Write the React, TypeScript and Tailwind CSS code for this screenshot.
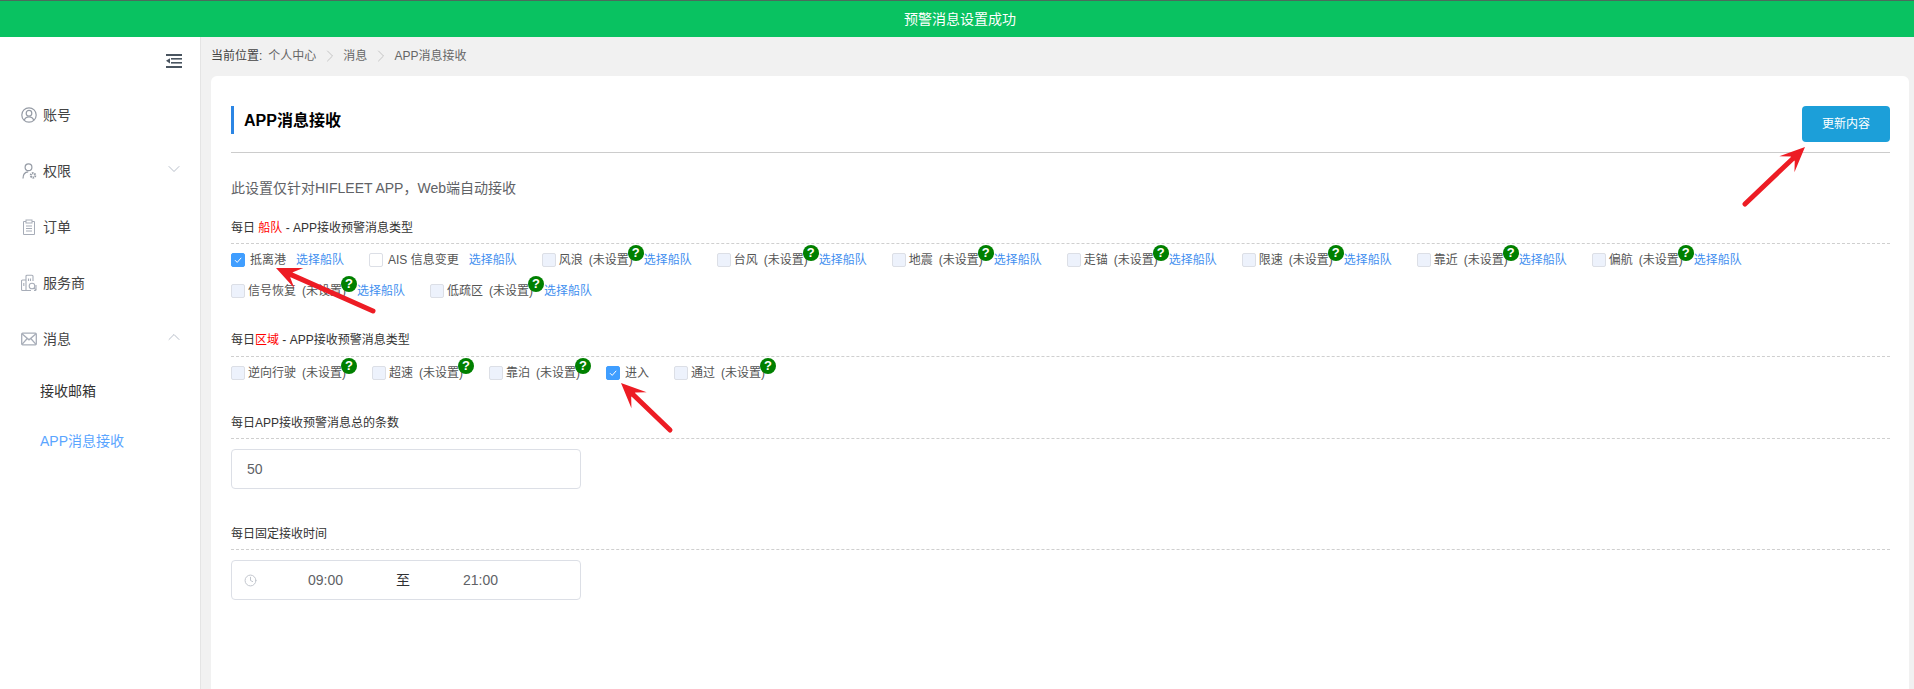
import { ChevronDown, ChevronRight, ChevronUp, Clock } from 'lucide-react';

const font = 'font-["Liberation_Sans","Noto_Sans_CJK_SC",sans-serif]';

function Check({ on = false, off = false }: { on?: boolean; off?: boolean }) {
  if (on) {
    return (
      <span className="flex h-[14px] w-[14px] shrink-0 items-center justify-center rounded-[2px] border border-[#409eff] bg-[#409eff]">
        <svg width="10" height="10" viewBox="0 0 10 10" fill="none" stroke="white" strokeWidth="1">
          <path d="M2 5.2 4.2 7.4 8.2 2.8" />
        </svg>
      </span>
    );
  }
  return <span className={`h-[14px] w-[14px] shrink-0 rounded-[2px] border border-[#dcdfe6] ${off ? 'bg-white' : 'bg-[#edf2fc]'}`} />;
}

function Link() {
  return <span className="w-[48px] shrink-0 whitespace-nowrap text-[#3f8fef]">选择船队</span>;
}

// 未勾选且未设置的类型, 右上角带绿色问号
function Unset({ name, link = true }: { name: string; link?: boolean }) {
  return (
    <div className={`flex items-center ${link ? 'mr-[25px]' : 'mr-[15px]'}`}>
      <Check />
      <span className="ml-[3px] whitespace-nowrap text-[#555]">{name}</span>
      <span className="relative ml-[6px] w-[55px] shrink-0 whitespace-nowrap text-[#555]">
        (未设置)
        <span className="absolute right-0 top-[-6px] flex h-4 w-4 items-center justify-center rounded-full bg-[#008000] text-[13px] font-bold leading-none text-white">?</span>
      </span>
      {link && <Link />}
    </div>
  );
}

function Checked({ name, link = true }: { name: string; link?: boolean }) {
  return (
    <div className="mr-[25px] flex items-center">
      <Check on />
      <span className="ml-[5px] whitespace-nowrap text-[#555]">{name}</span>
      {link && (
        <span className="ml-[10px]">
          <Link />
        </span>
      )}
    </div>
  );
}

function Heading({ children, className = '', low = true }: { children: React.ReactNode; className?: string; low?: boolean }) {
  return <div className={`border-b border-dashed border-[#cfcfcf] text-[12px] leading-4 text-[#333] ${low ? 'pb-[7px] pt-[1px]' : 'pb-2'} ${className}`}>{children}</div>;
}

function Arrow({ x1, y1, x2, y2 }: { x1: number; y1: number; x2: number; y2: number }) {
  const angle = Math.atan2(y2 - y1, x2 - x1);
  const ux = Math.cos(angle);
  const uy = Math.sin(angle);
  const nx = -uy;
  const ny = ux;
  const head = 25;
  const neck = 17;
  const bx = x2 - ux * head;
  const by = y2 - uy * head;
  const cx = x2 - ux * neck;
  const cy = y2 - uy * neck;
  const points = `${x2},${y2} ${bx + nx * 11},${by + ny * 11} ${cx + nx * 3},${cy + ny * 3} ${cx - nx * 3},${cy - ny * 3} ${bx - nx * 11},${by - ny * 11}`;
  return (
    <>
      <line x1={x1} y1={y1} x2={cx} y2={cy} stroke="#ed1c24" strokeWidth="5" strokeLinecap="round" />
      <polygon points={points} fill="#ed1c24" />
    </>
  );
}

function NavIcon({ kind }: { kind: string }) {
  const common = { viewBox: '0 0 16 16', fill: 'none', stroke: '#959ba5', strokeWidth: 1.2 };
  if (kind === 'user') {
    return (
      <svg className="h-4 w-4 shrink-0" {...common}>
        <circle cx="8" cy="8" r="7.2" />
        <circle cx="8" cy="6.2" r="2.8" />
        <path d="M3.2 13.2c.8-2.4 2.6-3.4 4.8-3.4s4 1 4.8 3.4" />
      </svg>
    );
  }
  if (kind === 'perm') {
    return (
      <svg className="h-4 w-4 shrink-0" {...common}>
        <circle cx="7.5" cy="4.2" r="3.4" />
        <path d="M2 15.5c0-3.8 2-6.4 5.2-6.6" />
        <circle cx="12" cy="12.4" r="2.2" strokeWidth="2.2" strokeDasharray="1.4 .7" />
      </svg>
    );
  }
  if (kind === 'order') {
    return (
      <svg className="h-4 w-4 shrink-0" {...common} stroke="#a7adb8" strokeWidth={1}>
        <path d="M5 2.5H2.5v13h11v-13H11" />
        <rect x="5" y="1" width="6" height="3" />
        <path d="M5 7h6M5 9.5h6M5 12h6" />
      </svg>
    );
  }
  if (kind === 'shop') {
    return (
      <svg className="h-[18px] w-4 shrink-0" viewBox="0 0 16 18" fill="none" stroke="#a7adb8" strokeWidth={1.1}>
        <path d="M5 16.5H1.5a1 1 0 0 1-1-1V7a1 1 0 0 1 1-1H5" />
        <path d="M5 16.5V2.2a1 1 0 0 1 1-1h5a1 1 0 0 1 1 1V7" />
        <path d="M7.5 4.5v2.5M9.5 4.5v2.5M2.8 9v3M5 16.5h5M15 11v4.5a1 1 0 0 1-1 1h-1" />
        <circle cx="11" cy="12" r="2.8" />
        <path d="m13 14 2.2 2.2" />
      </svg>
    );
  }
  return (
    <svg className="h-4 w-4 shrink-0" {...common} stroke="#a7adb8" strokeWidth={1.3}>
      <rect x=".7" y="2.2" width="14.6" height="11.6" rx="1" />
      <path d="m1 2.8 7 6 7-6M1 13.4l5-5.6M15 13.4l-5-5.6" />
    </svg>
  );
}

function NavItem({ kind, label, chevron }: { kind: string; label: string; chevron?: 'up' | 'down' }) {
  return (
    <div className="flex h-[56px] items-center pl-[21px] pr-[16px]">
      <NavIcon kind={kind} />
      <span className="ml-[6px] text-[14px] text-[#444]">{label}</span>
      {chevron === 'down' && <ChevronDown className="mb-[5px] ml-auto h-5 w-5 text-[#aab2bf]" strokeWidth={1} />}
      {chevron === 'up' && <ChevronUp className="mb-[5px] ml-auto h-5 w-5 text-[#aab2bf]" strokeWidth={1} />}
    </div>
  );
}

export default function App() {
  return (
    <div className={`relative flex h-[689px] flex-col overflow-hidden bg-[#f1f1f1] text-[12px] ${font}`}>
      <div className="flex h-[37px] shrink-0 items-center justify-center border-t border-[#4b6b5c] bg-[#09c261] pl-[6px] text-[14px] text-white">预警消息设置成功</div>
      <div className="flex min-h-0 flex-1">
        <aside className="w-[201px] shrink-0 border-r border-[#e4e4e4] bg-white">
          <div className="flex h-[50px] items-start justify-end pr-[18px] pt-[17px]">
            <svg width="16" height="14" viewBox="0 0 16 14" fill="#4a5560">
              <rect x="0" y="0" width="16" height="2" />
              <rect x="5" y="4" width="11" height="1.6" />
              <rect x="5" y="8" width="11" height="1.6" />
              <rect x="0" y="12" width="16" height="2" />
              <path d="M0 6.8 4 4.2v5.2z" />
            </svg>
          </div>
          <div>
            <NavItem kind="user" label="账号" />
            <NavItem kind="perm" label="权限" chevron="down" />
            <NavItem kind="order" label="订单" />
            <NavItem kind="shop" label="服务商" />
            <NavItem kind="mail" label="消息" chevron="up" />
          </div>
          <div className="-mt-[1px] flex h-[50px] items-center pl-[40px] text-[14px] text-[#333]">接收邮箱</div>
          <div className="flex h-[50px] items-center pl-[40px] text-[14px] text-[#5aa5ff]">APP消息接收</div>
        </aside>
        <main className="flex min-w-0 flex-1 flex-col pl-[10px] pr-[5px]">
          <div className="flex h-[39px] shrink-0 items-center pb-[2px] text-[#666]">
            <span className="text-[#444]">当前位置:</span>
            <span className="ml-[6px]">个人中心</span>
            <ChevronRight className="mx-[3.5px] h-5 w-5 text-[#bcbcbc]" strokeWidth={1} />
            <span>消息</span>
            <ChevronRight className="mx-[3.5px] h-5 w-5 text-[#bcbcbc]" strokeWidth={1} />
            <span>APP消息接收</span>
          </div>
          <section className="flex-1 rounded-t-[6px] bg-white pl-[20px] pr-[19px] pt-[30px]">
            <div className="flex items-start justify-between border-b border-[#cccccc] pb-[10px]">
              <h1 className="flex h-[28px] items-center border-l-[3px] border-[#2b85e4] pl-[10px] pt-[1px] text-[16px] font-bold text-black">APP消息接收</h1>
              <button type="button" className="h-[36px] w-[88px] rounded-[4px] bg-[#1c9fd9] text-[12px] text-white">更新内容</button>
            </div>
            <p className="mt-[25px] text-[14px] leading-5 text-[#606266]">此设置仅针对HIFLEET APP，Web端自动接收</p>

            <Heading className="mt-[21px]">
              每日 <span className="text-[#ff0000]">船队</span> - APP接收预警消息类型
            </Heading>
            <div className="flex h-[31px] items-center">
              <Checked name="抵离港" />
              <div className="mr-[25px] flex items-center">
                <Check off />
                <span className="ml-[5px] whitespace-nowrap text-[#555]">AIS 信息变更</span>
                <span className="ml-[10px]">
                  <Link />
                </span>
              </div>
              {['风浪', '台风', '地震', '走锚', '限速', '靠近', '偏航'].map((name) => (
                <Unset key={name} name={name} />
              ))}
            </div>
            <div className="flex h-[31px] items-center">
              <Unset name="信号恢复" />
              <Unset name="低疏区" />
            </div>

            <Heading className="mt-[26px]" low={false}>
              每日<span className="text-[#ff0000]">区域</span> - APP接收预警消息类型
            </Heading>
            <div className="flex h-[31px] items-center">
              <Unset name="逆向行驶" link={false} />
              <Unset name="超速" link={false} />
              <Unset name="靠泊" link={false} />
              <Checked name="进入" link={false} />
              <Unset name="通过" link={false} />
            </div>

            <Heading className="mt-[26px]">每日APP接收预警消息总的条数</Heading>
            <div className="mt-[10px] flex h-[40px] w-[350px] items-center rounded-[4px] border border-[#dcdfe6] pl-[15px] text-[14px] text-[#606266]">50</div>

            <Heading className="mt-[36px]">每日固定接收时间</Heading>
            <div className="mt-[10px] flex h-[40px] w-[350px] items-center rounded-[4px] border border-[#dcdfe6] pl-[12px] text-[14px] text-[#606266]">
              <Clock className="h-[13px] w-[13px] text-[#c0c4cc]" strokeWidth={1.8} />
              <span className="ml-[51px]">09:00</span>
              <span className="ml-[25px] w-[70px] text-center text-[#303133]">至</span>
              <span className="ml-[25px]">21:00</span>
            </div>
          </section>
        </main>
      </div>
      <svg className="pointer-events-none absolute left-0 top-0" width="1914" height="689">
        <Arrow x1={373} y1={311} x2={276} y2={268} />
        <Arrow x1={1745} y1={204} x2={1805} y2={147} />
        <Arrow x1={670} y1={430} x2={621} y2={383} />
      </svg>
    </div>
  );
}
